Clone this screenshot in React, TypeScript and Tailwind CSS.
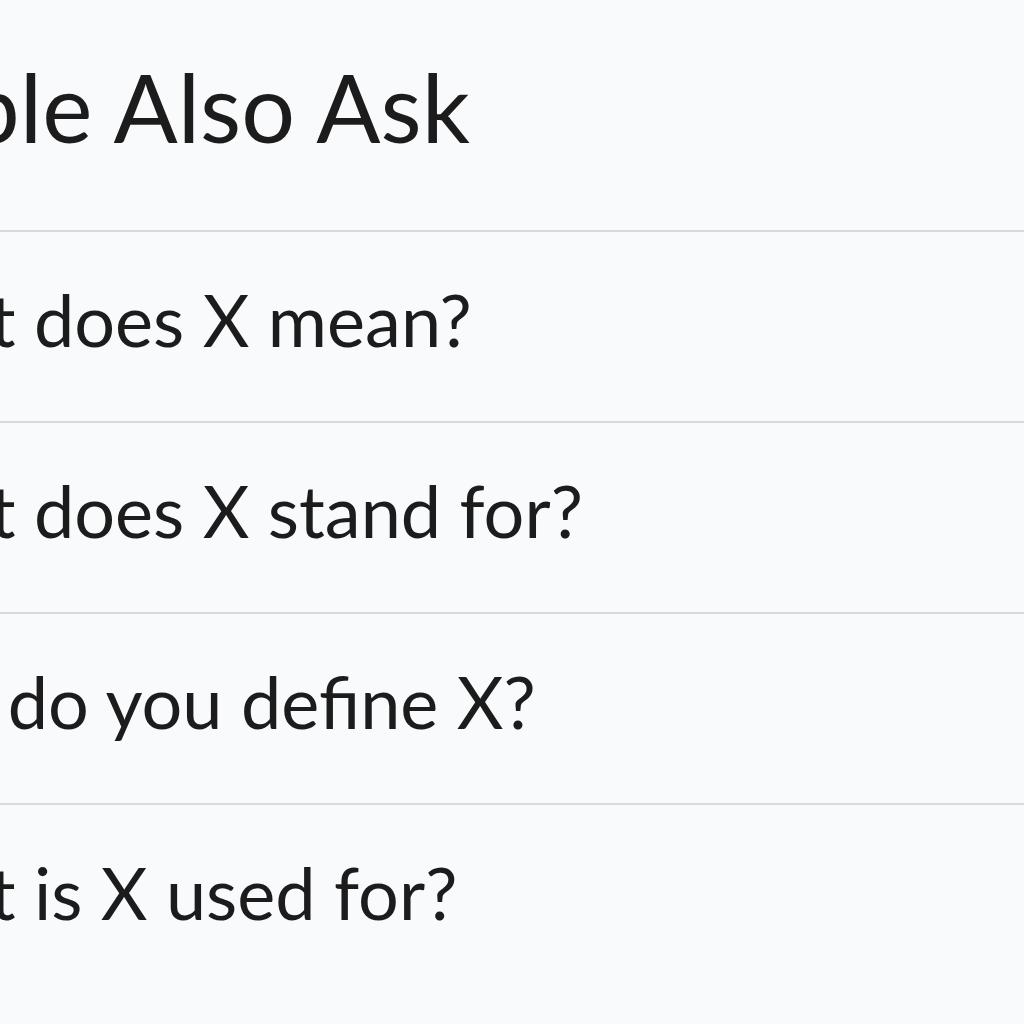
const questions = [
  "What does X mean?",
  "What does X stand for?",
  "How do you define X?",
  "What is X used for?",
];

export default function App() {
  return (
    <div className="w-[1024px] h-[1024px] overflow-hidden bg-[#f9fafc] text-[#1c1c1c] font-['Lato',sans-serif]">
      <div className="h-[230px] pt-[59px]">
        <h1 className="ml-[-192px] text-[95px] leading-none font-normal whitespace-nowrap">
          People Also Ask
        </h1>
      </div>
      {questions.map((q) => (
        <div key={q} className="h-[191px] border-t-2 border-[#d9d9db] pt-[51px]">
          <p className="ml-[-160px] text-[72px] leading-none whitespace-nowrap">{q}</p>
        </div>
      ))}
    </div>
  );
}
